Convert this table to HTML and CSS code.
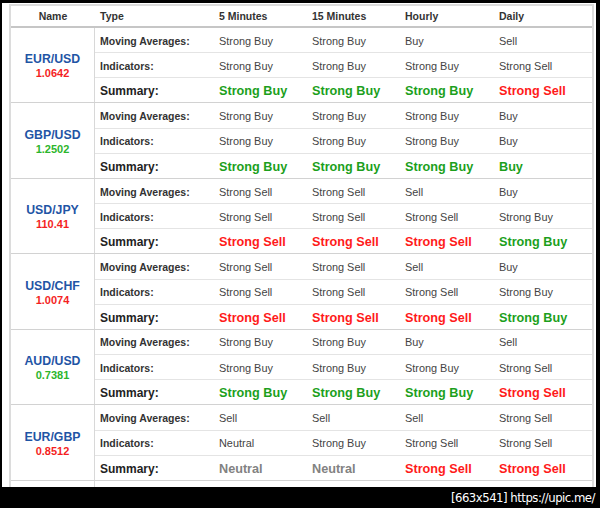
FILE: index.html
```html
<!DOCTYPE html>
<html>
<head>
<meta charset="utf-8">
<link rel="stylesheet" href="styles.css">
</head>
<body>
<div class="frame">
  <div class="table">
    <div class="head">
      <div class="hc name-h">Name</div>
      <div class="hc">Type</div>
      <div class="hc">5 Minutes</div>
      <div class="hc">15 Minutes</div>
      <div class="hc">Hourly</div>
      <div class="hc">Daily</div>
    </div>

    <div class="group">
      <div class="pair"><span class="sym">EUR/USD</span><span class="px red">1.0642</span></div>
      <div class="rows">
        <div class="row"><span class="lbl">Moving Averages:</span><span>Strong Buy</span><span>Strong Buy</span><span>Buy</span><span>Sell</span></div>
        <div class="row"><span class="lbl">Indicators:</span><span>Strong Buy</span><span>Strong Buy</span><span>Strong Buy</span><span>Strong Sell</span></div>
        <div class="row sum"><span class="lbl">Summary:</span><span class="g">Strong Buy</span><span class="g">Strong Buy</span><span class="g">Strong Buy</span><span class="r">Strong Sell</span></div>
      </div>
    </div>

    <div class="group">
      <div class="pair"><span class="sym">GBP/USD</span><span class="px green">1.2502</span></div>
      <div class="rows">
        <div class="row"><span class="lbl">Moving Averages:</span><span>Strong Buy</span><span>Strong Buy</span><span>Strong Buy</span><span>Buy</span></div>
        <div class="row"><span class="lbl">Indicators:</span><span>Strong Buy</span><span>Strong Buy</span><span>Strong Buy</span><span>Buy</span></div>
        <div class="row sum"><span class="lbl">Summary:</span><span class="g">Strong Buy</span><span class="g">Strong Buy</span><span class="g">Strong Buy</span><span class="g">Buy</span></div>
      </div>
    </div>

    <div class="group">
      <div class="pair"><span class="sym">USD/JPY</span><span class="px red">110.41</span></div>
      <div class="rows">
        <div class="row"><span class="lbl">Moving Averages:</span><span>Strong Sell</span><span>Strong Sell</span><span>Sell</span><span>Buy</span></div>
        <div class="row"><span class="lbl">Indicators:</span><span>Strong Sell</span><span>Strong Sell</span><span>Strong Sell</span><span>Strong Buy</span></div>
        <div class="row sum"><span class="lbl">Summary:</span><span class="r">Strong Sell</span><span class="r">Strong Sell</span><span class="r">Strong Sell</span><span class="g">Strong Buy</span></div>
      </div>
    </div>

    <div class="group">
      <div class="pair"><span class="sym">USD/CHF</span><span class="px red">1.0074</span></div>
      <div class="rows">
        <div class="row"><span class="lbl">Moving Averages:</span><span>Strong Sell</span><span>Strong Sell</span><span>Sell</span><span>Buy</span></div>
        <div class="row"><span class="lbl">Indicators:</span><span>Strong Sell</span><span>Strong Sell</span><span>Strong Sell</span><span>Strong Buy</span></div>
        <div class="row sum"><span class="lbl">Summary:</span><span class="r">Strong Sell</span><span class="r">Strong Sell</span><span class="r">Strong Sell</span><span class="g">Strong Buy</span></div>
      </div>
    </div>

    <div class="group">
      <div class="pair"><span class="sym">AUD/USD</span><span class="px green">0.7381</span></div>
      <div class="rows">
        <div class="row"><span class="lbl">Moving Averages:</span><span>Strong Buy</span><span>Strong Buy</span><span>Buy</span><span>Sell</span></div>
        <div class="row"><span class="lbl">Indicators:</span><span>Strong Buy</span><span>Strong Buy</span><span>Strong Buy</span><span>Strong Sell</span></div>
        <div class="row sum"><span class="lbl">Summary:</span><span class="g">Strong Buy</span><span class="g">Strong Buy</span><span class="g">Strong Buy</span><span class="r">Strong Sell</span></div>
      </div>
    </div>

    <div class="group">
      <div class="pair"><span class="sym">EUR/GBP</span><span class="px red">0.8512</span></div>
      <div class="rows">
        <div class="row"><span class="lbl">Moving Averages:</span><span>Sell</span><span>Sell</span><span>Sell</span><span>Strong Sell</span></div>
        <div class="row"><span class="lbl">Indicators:</span><span>Neutral</span><span>Strong Buy</span><span>Strong Sell</span><span>Strong Sell</span></div>
        <div class="row sum"><span class="lbl">Summary:</span><span class="n">Neutral</span><span class="n">Neutral</span><span class="r">Strong Sell</span><span class="r">Strong Sell</span></div>
      </div>
    </div>

    <div class="group">
      <div class="pair"></div>
      <div class="rows">
        <div class="row"></div>
        <div class="row"></div>
        <div class="row"></div>
      </div>
    </div>
  </div>
</div>
<div class="footer">[663x541] https://upic.me/</div>
</body>
</html>
```

FILE: styles.css
```css
html, body {
  margin: 0;
  padding: 0;
  background: #000;
}

body {
  width: 600px;
  height: 508px;
  overflow: hidden;
  font-family: "Liberation Sans", Arial, sans-serif;
}

.frame {
  margin: 3px 4px 0 2px;
  height: 484px;
  background: #fff;
  overflow: hidden;
  padding: 1px 0 0 7px;
  box-sizing: border-box;
}

.table {
  width: 585px;
  box-sizing: border-box;
  border: 2px solid #dcdcdc;
  border-bottom: none;
}

.head {
  display: grid;
  grid-template-columns: 84px 119px 93px 93px 94px 1fr;
  height: 20px;
  border-bottom: 2px solid #c6c6c6;
  align-items: center;
}

.hc {
  font-weight: bold;
  font-size: 10.5px;
  color: #333;
  padding-left: 5px;
}

.hc.name-h {
  text-align: center;
  padding-left: 0;
}

.group {
  display: grid;
  grid-template-columns: 84px 1fr;
  border-bottom: 1px solid #d2d2d2;
}

.pair {
  border-right: 1px solid #d8d8d8;
  display: flex;
  flex-direction: column;
  align-items: center;
  justify-content: center;
  font-weight: bold;
  padding-top: 2px;
}

.sym {
  color: #1f55a5;
  font-size: 12.3px;
  line-height: 14px;
}

.px {
  font-size: 11px;
  line-height: 14px;
}

.red { color: #f41f1f; }
.green { color: #2cb52c; }

.row {
  display: grid;
  grid-template-columns: 119px 93px 93px 94px 1fr;
  height: 24.17px;
  align-items: center;
  border-bottom: 1px solid #e4e4e4;
  font-size: 10.9px;
  color: #444;
}

.row:last-child {
  border-bottom: none;
}

.row span {
  padding-left: 5px;
  padding-top: 1px;
  white-space: nowrap;
}

.row .lbl {
  font-weight: bold;
  font-size: 10.5px;
  color: #333;
}

.row.sum span {
  font-weight: bold;
  font-size: 12.67px;
  padding-top: 2px;
}

.row.sum .lbl {
  font-size: 12px;
  color: #222;
}

.row.sum .g { color: #1c9f1c; }
.row.sum .r { color: #ff1a1a; }
.row.sum .n { color: #828282; }

.footer {
  height: 21px;
  line-height: 22px;
  color: #fff;
  text-align: right;
  padding-right: 5px;
  font-family: "Liberation Sans Narrow", "DejaVu Sans Condensed", sans-serif;
  font-size: 13px;
  letter-spacing: -0.5px;
}
```
